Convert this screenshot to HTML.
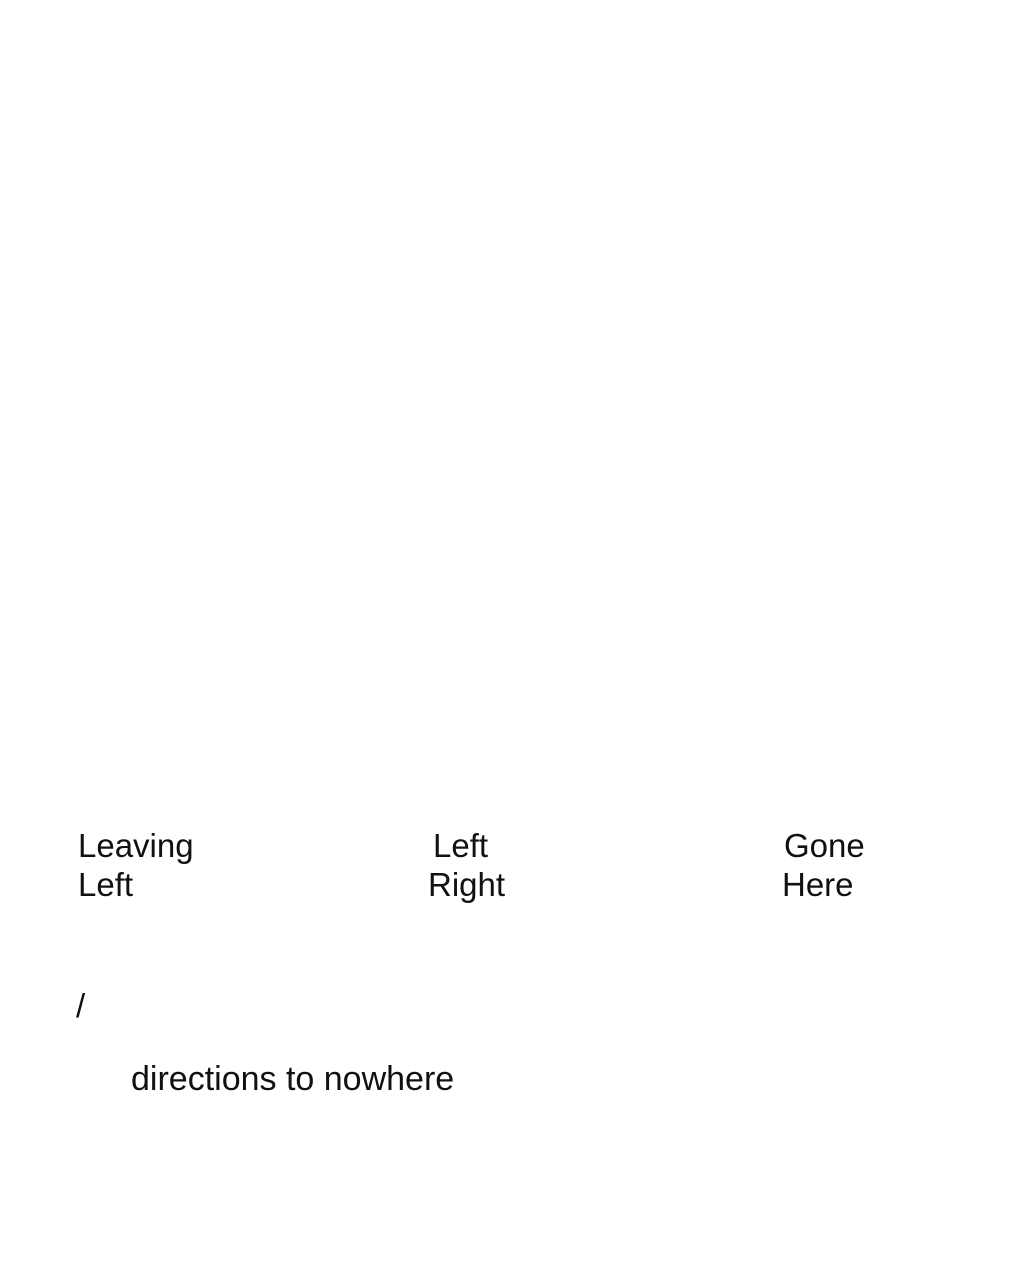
<!DOCTYPE html>
<html><head><meta charset="utf-8"><style>
html,body{margin:0;padding:0;background:#fff;width:1024px;height:1280px;overflow:hidden}
div{position:absolute;font-family:"Liberation Sans",sans-serif;font-size:33px;line-height:39px;color:#111;white-space:nowrap}
</style></head><body>
<div style="left:78px;top:826px">Leaving</div>
<div style="left:78px;top:865px">Left</div>
<div style="left:433px;top:826px">Left</div>
<div style="left:428px;top:865px">Right</div>
<div style="left:784px;top:826px">Gone</div>
<div style="left:782px;top:865px">Here</div>
<div style="left:76px;top:986px">/</div>
<div style="left:131px;top:1060px;font-size:34px">directions to nowhere</div>
</body></html>
